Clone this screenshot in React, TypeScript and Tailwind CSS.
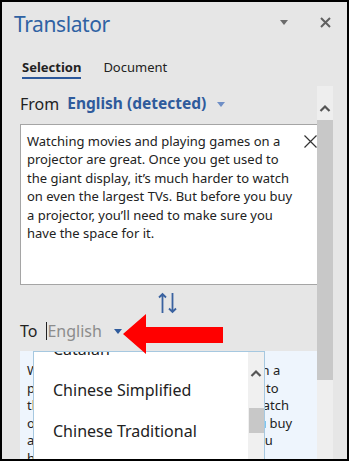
import React from "react";

const sourceLines = [
  "Watching movies and playing games on a",
  "projector are great. Once you get used to",
  "the giant display, it’s much harder to watch",
  "on even the largest TVs. But before you buy",
  "a projector, you’ll need to make sure you",
  "have the space for it.",
];

const languages = ["Catalan", "Chinese Simplified", "Chinese Traditional", "Croatian"];

const Caret = ({ className }: { className: string }) => (
  <svg width="8" height="5" viewBox="0 0 8 5" className={className}>
    <path d="M0 0 L8 0 L4 5 Z" fill="currentColor" />
  </svg>
);

const ChevronUp = () => (
  <svg width="12" height="8" viewBox="0 0 12 8">
    <path d="M1.5 7 L6 2.5 L10.5 7" fill="none" stroke="#555" strokeWidth="2.2" />
  </svg>
);

const App = () => {
  return (
    <div
      className="relative w-[349px] h-[461px] overflow-hidden border-2 border-black bg-[#e6e6e6] flex flex-col text-[#222]"
      style={{ fontFamily: '"Noto Sans", "Open Sans", sans-serif' }}
    >
      {/* header */}
      <div className="flex items-center h-[40px] pl-[12px] pr-[16px] shrink-0">
        <h1 className="text-[21px] leading-none text-[#2f62a3] tracking-[-0.4px] pt-[5px]">Translator</h1>
        <div className="ml-auto flex items-center gap-[32px]">
          <Caret className="text-[#6b6b6b]" />
          <svg width="11" height="11" viewBox="0 0 11 11">
            <path d="M1 1 L10 10 M10 1 L1 10" stroke="#606060" strokeWidth="2" />
          </svg>
        </div>
      </div>

      {/* tabs */}
      <div className="flex items-start gap-[22px] pl-[20px] h-[44px] pt-[17px] shrink-0 text-[13px]">
        <div className="flex flex-col">
          <span className="font-bold leading-[16px] text-[#222]">Selection</span>
          <span className="mt-[2px] h-[2px] bg-[#2b579a]" />
        </div>
        <span className="leading-[16px]">Document</span>
      </div>

      {/* body */}
      <div className="flex flex-1 min-h-0">
        <div className="flex-1 flex flex-col pl-[18px] min-w-0 overflow-hidden">
          <div className="flex items-center h-[34px] mt-[1px] text-[16px] shrink-0">
            <span>From</span>
            <span className="ml-[8px] font-bold text-[15.5px] text-[#2f5b9c]">English (detected)</span>
            <Caret className="ml-[11px] text-[#6f8fc6]" />
          </div>

          <div className="relative shrink-0 mt-[3px] h-[161px] bg-white border border-[#a5a5a5] border-r-0 pl-[6px] pt-[7px] text-[13px] leading-[18.4px] text-[#222]">
            {sourceLines.map((line) => (
              <div key={line} className="whitespace-nowrap">{line}</div>
            ))}
            <svg width="13" height="13" viewBox="0 0 13 13" className="absolute right-0 top-[10px]">
              <path d="M0.5 0.5 L12.5 12.5 M12.5 0.5 L0.5 12.5" stroke="#333" strokeWidth="1.2" />
            </svg>
          </div>

          <div className="flex justify-center h-[36px] items-center pr-[2px] shrink-0">
            <svg width="20" height="22" viewBox="0 0 20 22">
              <path d="M4.5 21 L4.5 2 M1 5.5 L4.5 2 L8 5.5" fill="none" stroke="#3a62a0" strokeWidth="1.8" />
              <path d="M14.5 1 L14.5 20 M11 16.5 L14.5 20 L18 16.5" fill="none" stroke="#3a62a0" strokeWidth="1.8" />
            </svg>
          </div>

          <div className="flex items-center h-[20px] text-[16px] shrink-0">
            <span>To</span>
            <span className="ml-[9px] w-[1px] h-[18px] bg-[#222]" />
            <span className="text-[#8c8c8c]">English</span>
            <Caret className="ml-[12px] text-[#2f5b9c]" />
          </div>

          <div className="flex-1 shrink-0 mt-[10px] bg-[#eef5fd] pl-[7px] pt-[11px] text-[13px] leading-[17.6px] text-[#222]">
            {sourceLines.map((line) => (
              <div key={line} className="whitespace-nowrap">{line}</div>
            ))}
          </div>
        </div>

        {/* panel scrollbar */}
        <div className="w-[16px] bg-[#eeeeee] flex flex-col items-center shrink-0">
          <div className="h-[34px] flex items-end pb-[8px] shrink-0">
            <ChevronUp />
          </div>
          <div className="w-[16px] h-[260px] bg-[#c8c8c8] shrink-0" />
        </div>
        <div className="w-[14px] shrink-0" />
      </div>

      {/* language dropdown */}
      <div className="absolute left-[31px] top-[349px] w-[232px] h-[112px] bg-white border border-[#a6c8e0] border-b-0 overflow-hidden flex">
        <div className="flex-1 flex flex-col -mt-[24px] text-[16px] text-[#222]">
          {languages.map((lang) => (
            <div key={lang} className="h-[41px] shrink-0 flex items-center pl-[19px] whitespace-nowrap">
              {lang}
            </div>
          ))}
        </div>
        <div className="w-[16px] bg-[#f0f0f0] flex flex-col items-center">
          <div className="mt-[17px]">
            <ChevronUp />
          </div>
          <div className="mt-[31px] w-[15px] h-[25px] bg-[#c8c8c8]" />
        </div>
      </div>

      {/* red annotation arrow */}
      <svg width="102" height="41" viewBox="0 0 102 41" className="absolute left-[119px] top-[311px]">
        <path d="M2 21 L25 1 L25 14 L102 14 L102 30 L25 30 L25 41 Z" fill="#ff0000" />
      </svg>
    </div>
  );
};

export default App;
